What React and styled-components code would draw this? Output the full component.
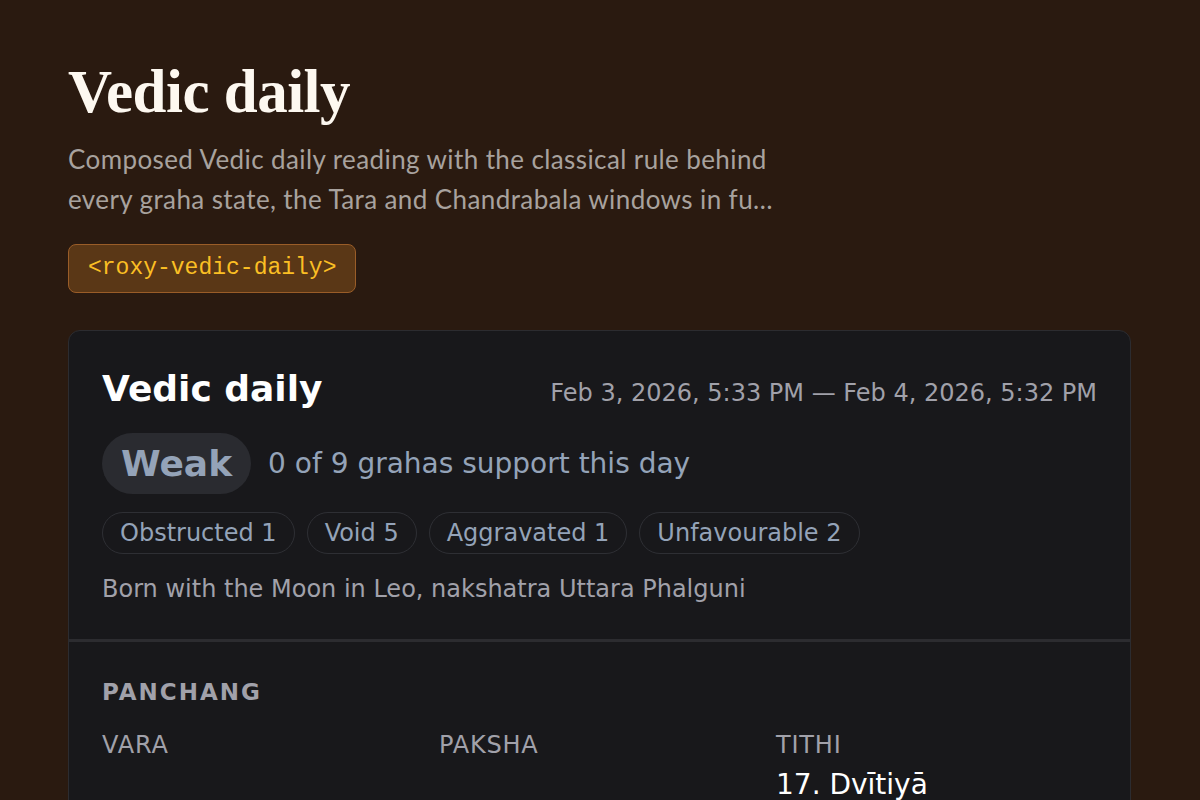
import React from 'react';
import styled, { createGlobalStyle } from 'styled-components';

const GlobalStyle = createGlobalStyle`
  html, body {
    margin: 0;
    padding: 0;
    background: #2a1a10;
  }
  body {
    font-family: "DejaVu Sans", sans-serif;
    overflow: hidden;
  }
`;

const Page = styled.main`
  padding: 56px 69px 0 68px;
`;

const Heading = styled.h1`
  margin: 0;
  font-family: "Liberation Serif", "DejaVu Serif", serif;
  font-weight: 700;
  font-size: 61px;
  line-height: 72px;
  color: #fdf8f0;
  letter-spacing: -0.5px;
`;

const Lead = styled.p`
  margin: 11px 0 0;
  width: 706px;
  font-family: Lato, "Liberation Sans", sans-serif;
  font-size: 26px;
  line-height: 40px;
  color: #a8a29e;
  letter-spacing: 0.4px;
  display: -webkit-box;
  -webkit-line-clamp: 2;
  -webkit-box-orient: vertical;
  overflow: hidden;
`;

const TagRow = styled.div`
  display: flex;
  margin-top: 25px;
`;

const Tag = styled.code`
  display: block;
  padding: 0 19px;
  height: 47px;
  line-height: 47px;
  border: 1px solid #9a5d28;
  border-radius: 8px;
  background: #5a3716;
  color: #fbbf24;
  font-family: "Liberation Mono", monospace;
  font-size: 23px;
`;

const Card = styled.section`
  margin-top: 37px;
  background: #18181b;
  border: 1px solid #2c2c30;
  border-radius: 12px;
  overflow: hidden;
`;

const Summary = styled.div`
  padding: 34px 33px 34px;
  border-bottom: 3px solid #2c2c30;
`;

const TitleRow = styled.div`
  display: flex;
  justify-content: space-between;
  align-items: baseline;
`;

const CardTitle = styled.h2`
  margin: 0;
  font-size: 36px;
  font-weight: 700;
  color: #ffffff;
  line-height: 48px;
`;

const Range = styled.span`
  font-size: 24px;
  color: #a1a1aa;
`;

const VerdictRow = styled.div`
  display: flex;
  align-items: center;
  gap: 17px;
  margin-top: 20px;
`;

const Verdict = styled.span`
  display: inline-flex;
  align-items: center;
  height: 61px;
  padding: 0 19px;
  border-radius: 31px;
  background: #2a2b30;
  color: #94a3b8;
  font-size: 36px;
  font-weight: 700;
`;

const VerdictText = styled.span`
  font-size: 28px;
  color: #94a3b8;
`;

const Chips = styled.div`
  display: flex;
  gap: 12px;
  margin-top: 18px;
`;

const Chip = styled.span`
  display: inline-flex;
  align-items: center;
  height: 40px;
  padding: 0 17px;
  border: 1px solid #2e2f34;
  border-radius: 21px;
  color: #94a3b8;
  font-size: 24px;
`;

const Note = styled.p`
  margin: 19px 0 0;
  font-size: 24px;
  line-height: 32px;
  color: #a1a1aa;
`;

const Section = styled.div`
  padding: 35px 33px 40px;
`;

const SectionLabel = styled.h3`
  margin: 0;
  font-size: 23px;
  font-weight: 700;
  letter-spacing: 2px;
  color: #a1a1aa;
  line-height: 30px;
`;

const Grid = styled.div`
  display: grid;
  grid-template-columns: repeat(3, 1fr);
  column-gap: 16px;
  margin-top: 23px;
`;

const Field = styled.div`
  display: flex;
  flex-direction: column;
  gap: 8px;
`;

const FieldLabel = styled.span`
  font-size: 24px;
  letter-spacing: 0.8px;
  color: #a1a1aa;
  line-height: 30px;
`;

const FieldValue = styled.span`
  font-size: 28px;
  color: #ffffff;
  line-height: 34px;
`;

const chips = ['Obstructed 1', 'Void 5', 'Aggravated 1', 'Unfavourable 2'];

const fields = [
  { label: 'VARA', value: '' },
  { label: 'PAKSHA', value: '' },
  { label: 'TITHI', value: '17. Dvītiyā' },
];

export default function App() {
  return (
    <>
      <GlobalStyle />
      <Page>
        <Heading>Vedic daily</Heading>
        <Lead>
          Composed Vedic daily reading with the classical rule behind every graha state,
          the Tara and Chandrabala windows in full, and the panchang for the day.
        </Lead>
        <TagRow>
          <Tag>{'<roxy-vedic-daily>'}</Tag>
        </TagRow>

        <Card>
          <Summary>
            <TitleRow>
              <CardTitle>Vedic daily</CardTitle>
              <Range>Feb 3, 2026, 5:33 PM — Feb 4, 2026, 5:32 PM</Range>
            </TitleRow>
            <VerdictRow>
              <Verdict>Weak</Verdict>
              <VerdictText>0 of 9 grahas support this day</VerdictText>
            </VerdictRow>
            <Chips>
              {chips.map((c) => (
                <Chip key={c}>{c}</Chip>
              ))}
            </Chips>
            <Note>Born with the Moon in Leo, nakshatra Uttara Phalguni</Note>
          </Summary>

          <Section>
            <SectionLabel>PANCHANG</SectionLabel>
            <Grid>
              {fields.map((f) => (
                <Field key={f.label}>
                  <FieldLabel>{f.label}</FieldLabel>
                  {f.value && <FieldValue>{f.value}</FieldValue>}
                </Field>
              ))}
            </Grid>
          </Section>
        </Card>
      </Page>
    </>
  );
}
